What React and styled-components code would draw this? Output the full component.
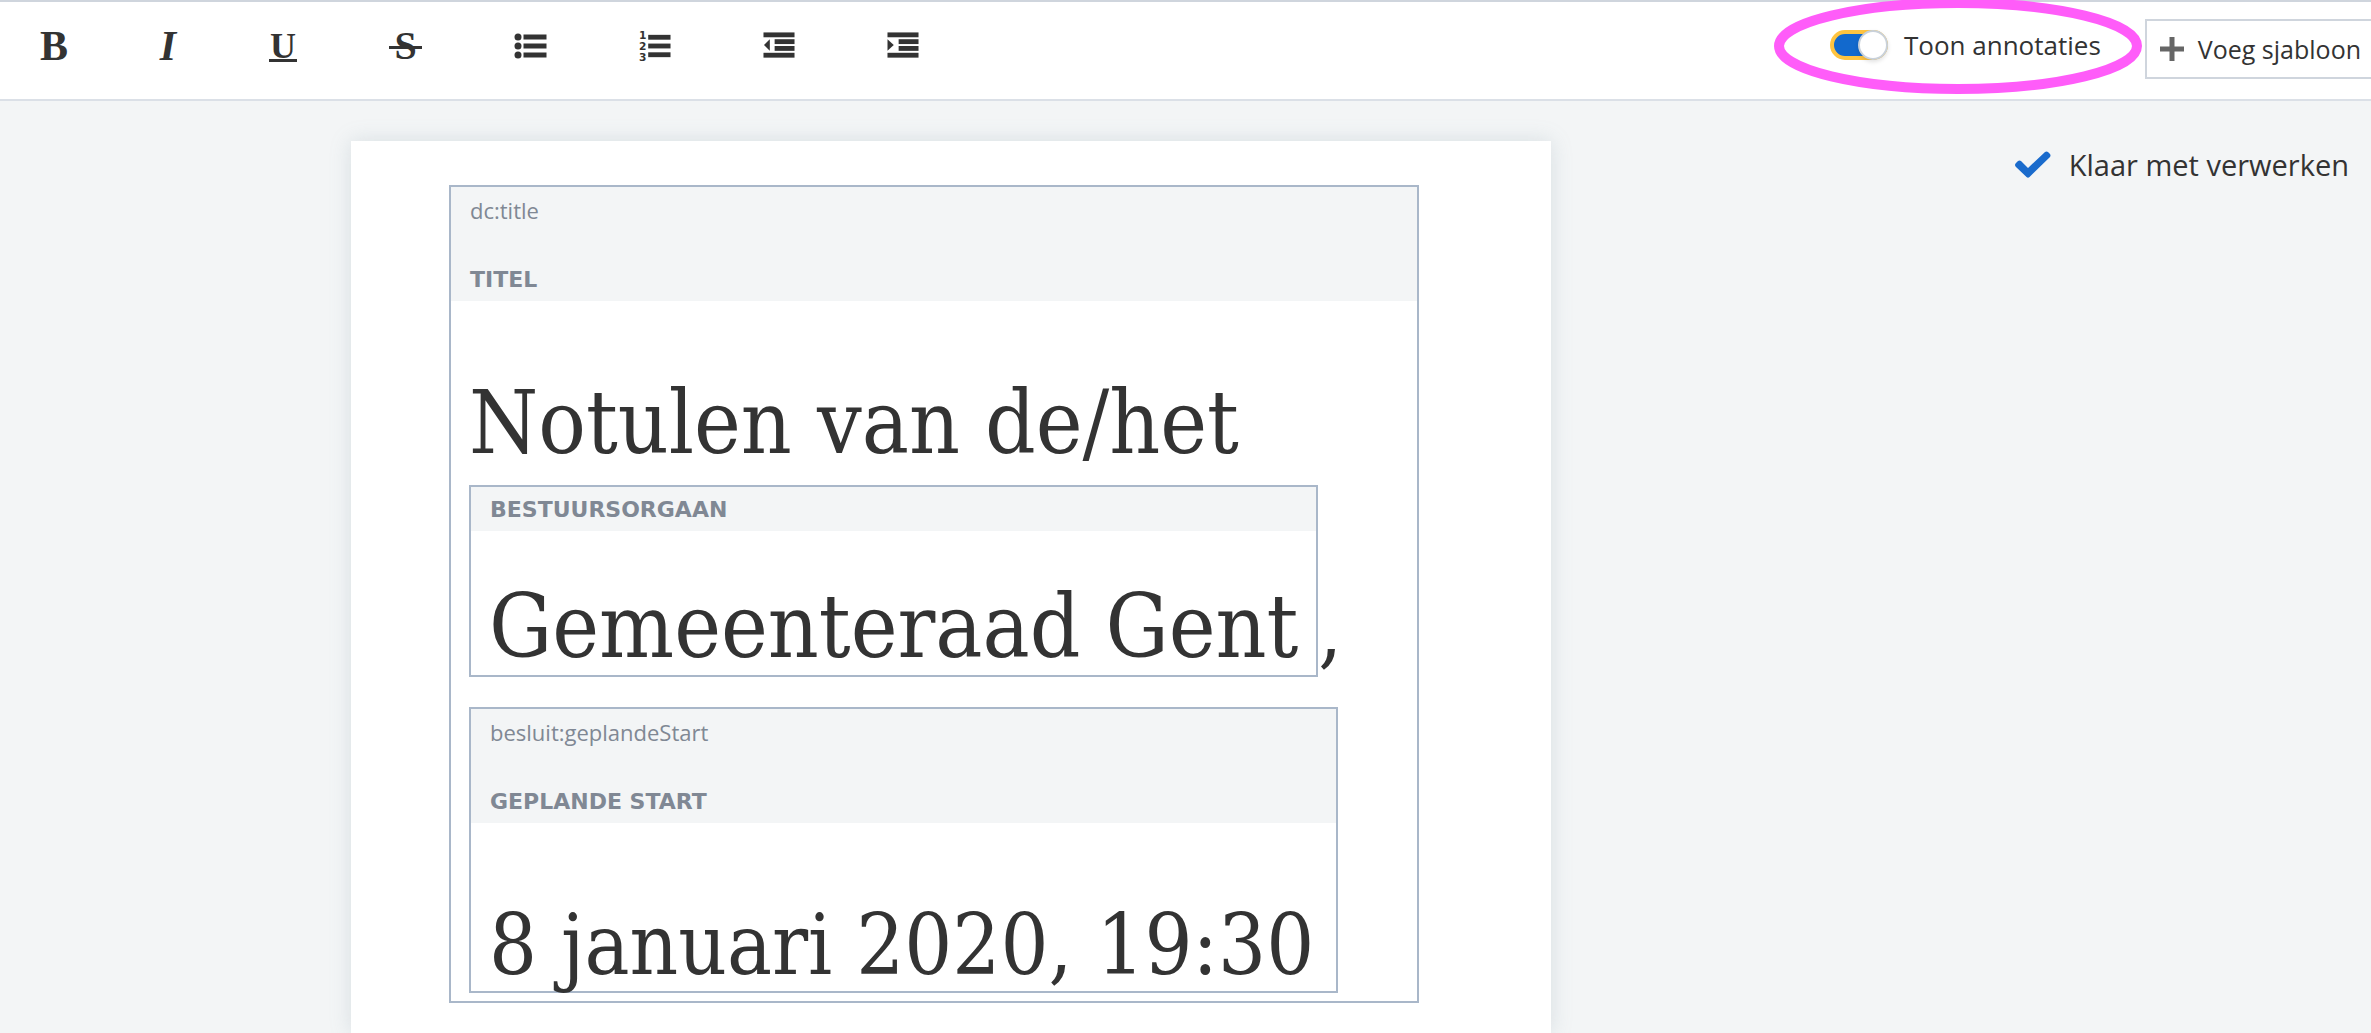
import React, { useState } from "react";
import styled, { createGlobalStyle } from "styled-components";

const sans = `"Open Sans", "Noto Sans", sans-serif`;
const serif = `"DejaVu Serif Condensed", "DejaVu Serif", serif`;

const GlobalStyle = createGlobalStyle`
  *, *::before, *::after { box-sizing: border-box; }
  html, body, #root { height: 100%; }
  body {
    margin: 0;
    overflow: hidden;
    background: #f3f5f6;
    color: #333;
    font-family: ${sans};
  }
`;

const Screen = styled.div`
  display: flex;
  flex-direction: column;
  min-height: 100%;
`;

const Toolbar = styled.header`
  display: flex;
  justify-content: space-between;
  height: 101px;
  border-top: 2px solid #cfd5dd;
  border-bottom: 2px solid #dbe0e7;
  background: #fff;
`;

const FormatGroup = styled.div`
  display: flex;
  align-items: flex-start;
  gap: 92px;
  padding: 22px 0 0 41px;
`;

const FormatButton = styled.button`
  display: flex;
  align-items: center;
  justify-content: center;
  width: ${(p) => p.$width}px;
  height: 44px;
  padding: 0;
  border: 0;
  background: none;
  color: #333;
  font: ${(p) => p.$face || "bold"} 42px/44px "Liberation Serif", serif;
`;

const Underlined = styled.span`
  width: 28px;
  height: 30px;
  margin-top: 2px;
  border-bottom: 3px solid #333;
  font-size: 36px;
  line-height: 29px;
`;

const Struck = styled.span`
  position: relative;
  padding: 0 5px;
  font-size: 40px;
  &::after {
    content: "";
    position: absolute;
    left: 0;
    right: 0;
    top: 22px;
    border-top: 3px solid #333;
  }
`;

const ActionGroup = styled.div`
  display: flex;
  align-items: flex-start;
  gap: 44px;
  padding-top: 17px;
`;

const Toggle = styled.label`
  position: relative;
  display: flex;
  align-items: center;
  gap: 16px;
  height: 51px;
  font-size: 26px;
  white-space: nowrap;
`;

const Switch = styled.input`
  appearance: none;
  display: flex;
  justify-content: flex-end;
  width: 58px;
  height: 30px;
  margin: 0;
  border: 4px solid #ffc440;
  border-radius: 15px;
  background: #1269cd;
  &::before {
    content: "";
    width: 30px;
    height: 30px;
    margin: -4px;
    border: 2px solid #c9d1da;
    border-radius: 50%;
    background: #fff;
    box-shadow: 0 2px 4px rgba(0, 0, 0, 0.12);
  }
  &:not(:checked) {
    justify-content: flex-start;
    background: #cbd2da;
  }
`;

const Highlight = styled.svg`
  position: absolute;
  top: -21px;
  left: -56px;
  pointer-events: none;
`;

const TemplateButton = styled.button`
  display: flex;
  align-items: center;
  gap: 14px;
  height: 60px;
  padding: 0 10px 0 13px;
  border: 2px solid #cfd5dd;
  border-right: 0;
  background: #fff;
  color: #333;
  font: 25px ${sans};
  white-space: nowrap;
`;

const Workspace = styled.div`
  display: flex;
  flex: 1;
`;

const Canvas = styled.main`
  display: flex;
  flex: 1;
  justify-content: center;
  padding-top: 40px;
`;

const Paper = styled.article`
  width: 100%;
  max-width: 1200px;
  padding: 44px 132px 0 98px;
  background: #fff;
  box-shadow: 0 0 20px rgba(120, 145, 160, 0.22);
`;

const Sidebar = styled.aside`
  width: 469px;
  padding: 39px 22px 0 0;
`;

const Status = styled.p`
  display: flex;
  align-items: center;
  justify-content: flex-end;
  gap: 18px;
  margin: 0;
  font-size: 29px;
  line-height: 50px;
  white-space: nowrap;
`;

const Annotation = styled.section`
  min-width: ${(p) => p.$minWidth || 0}px;
  border: 2px solid #a9b7c9;
`;

const AnnotationHead = styled.div`
  padding: 0 19px;
  background: #f3f5f6;
  color: #808894;
`;

const Property = styled.div`
  height: 70px;
  font-size: 22px;
  line-height: 46px;
`;

const TypeLabel = styled.div`
  height: 44px;
  font: bold 22px/46px "DejaVu Sans", sans-serif;
  text-transform: uppercase;
`;

const TitleBody = styled.div`
  padding: 59px 0 8px 18px;
`;

const Line = styled.div`
  display: flex;
  align-items: flex-end;
  margin-bottom: ${(p) => p.$after || 0}px;
`;

const Heading = styled.h1`
  margin: 0;
  font: 88px/125px ${serif};
  white-space: nowrap;
`;

const Value = styled.div`
  height: ${(p) => p.$height}px;
  padding: ${(p) => p.$above}px 18px 0;
  font: ${(p) => p.$size}px/134px ${serif};
  white-space: nowrap;
`;

const Comma = styled.span`
  font: 84px/96px ${serif};
`;

const BulletIcon = () => (
  <svg width="33" height="34" viewBox="0 0 33 34" fill="#333" aria-hidden="true">
    {[8, 17, 26].map((y) => (
      <g key={y}>
        <circle cx="4" cy={y} r="3.5" />
        <rect x="9.5" y={y - 2.5} width="23" height="5" />
      </g>
    ))}
  </svg>
);

const NumberIcon = () => (
  <svg width="33" height="34" viewBox="0 0 33 34" fill="#333" aria-hidden="true">
    {[8, 17, 26].map((y, i) => (
      <g key={y}>
        <text x="0" y={10 + i * 11} fontFamily="DejaVu Sans" fontWeight="bold" fontSize="11">
          {i + 1}
        </text>
        <rect x="9.5" y={y - 2.5} width="23" height="5" />
      </g>
    ))}
  </svg>
);

const IndentIcon = ({ outward }) => (
  <svg width="33" height="34" viewBox="0 0 33 34" fill="#333" aria-hidden="true">
    <rect x="0.5" y="3" width="32" height="5" />
    <rect x="12" y="10" width="20.5" height="5" />
    <rect x="12" y="17" width="20.5" height="5" />
    <rect x="0.5" y="24" width="32" height="5" />
    <path d={outward ? "M7 10v12L1 16z" : "M0.500 10v12L7 16z"} />
  </svg>
);

const PlusIcon = () => (
  <svg width="24" height="24" viewBox="0 0 24 24" fill="#666" aria-hidden="true">
    <path d="M9.500 0h5v9.500H24v5h-9.500V24h-5v-9.500H0v-5h9.500z" />
  </svg>
);

const CheckIcon = () => (
  <svg width="36" height="28" viewBox="0 0 36 28" fill="#1a6bcc" aria-hidden="true">
    <path d="M0 14q0-1 1-2l2-2q1.500-1 3 0l7 7L30 1q1.500-1 3 0l2 2q1 1.500 0 3L14.500 26q-1.500 1.500-3 0L1 16q-1-1-1-2z" />
  </svg>
);

export default function App() {
  const [annotated, setAnnotated] = useState(true);
  return (
    <Screen>
      <GlobalStyle />
      <Toolbar>
        <FormatGroup>
          <FormatButton $width={26} aria-label="Vet">B</FormatButton>
          <FormatButton $width={18} $face="italic bold" aria-label="Cursief">I</FormatButton>
          <FormatButton $width={28} aria-label="Onderstreept">
            <Underlined>U</Underlined>
          </FormatButton>
          <FormatButton $width={33} aria-label="Doorhalen">
            <Struck>S</Struck>
          </FormatButton>
          <FormatButton $width={33} aria-label="Opsomming"><BulletIcon /></FormatButton>
          <FormatButton $width={32} aria-label="Genummerde lijst"><NumberIcon /></FormatButton>
          <FormatButton $width={32} aria-label="Uitspringen"><IndentIcon outward /></FormatButton>
          <FormatButton $width={32} aria-label="Inspringen"><IndentIcon /></FormatButton>
        </FormatGroup>
        <ActionGroup>
          <Toggle>
            <Switch
              type="checkbox"
              checked={annotated}
              onChange={(e) => setAnnotated(e.target.checked)}
            />
            Toon annotaties
            <Highlight width="368" height="96" viewBox="0 0 368 96" aria-hidden="true">
              <ellipse cx="184" cy="48" rx="179" ry="43" fill="none" stroke="#ff5cf9" strokeWidth="10" />
            </Highlight>
          </Toggle>
          <TemplateButton>
            <PlusIcon />
            Voeg sjabloon
          </TemplateButton>
        </ActionGroup>
      </Toolbar>
      <Workspace>
        <Canvas>
          <Paper>
            <Annotation>
              <AnnotationHead>
                <Property>dc:title</Property>
                <TypeLabel>Titel</TypeLabel>
              </AnnotationHead>
              <TitleBody>
                <Heading>Notulen van de/het</Heading>
                <Line $after={30}>
                  <Annotation $minWidth={849}>
                    <AnnotationHead>
                      <TypeLabel>Bestuursorgaan</TypeLabel>
                    </AnnotationHead>
                    <Value $size={88} $height={144} $above={29}>Gemeenteraad Gent</Value>
                  </Annotation>
                  <Comma>,</Comma>
                </Line>
                <Line>
                  <Annotation $minWidth={869}>
                    <AnnotationHead>
                      <Property>besluit:geplandeStart</Property>
                      <TypeLabel>Geplande start</TypeLabel>
                    </AnnotationHead>
                    <Value $size={84} $height={168} $above={55}>8 januari 2020, 19:30</Value>
                  </Annotation>
                </Line>
              </TitleBody>
            </Annotation>
          </Paper>
        </Canvas>
        <Sidebar>
          <Status>
            <CheckIcon />
            Klaar met verwerken
          </Status>
        </Sidebar>
      </Workspace>
    </Screen>
  );
}
